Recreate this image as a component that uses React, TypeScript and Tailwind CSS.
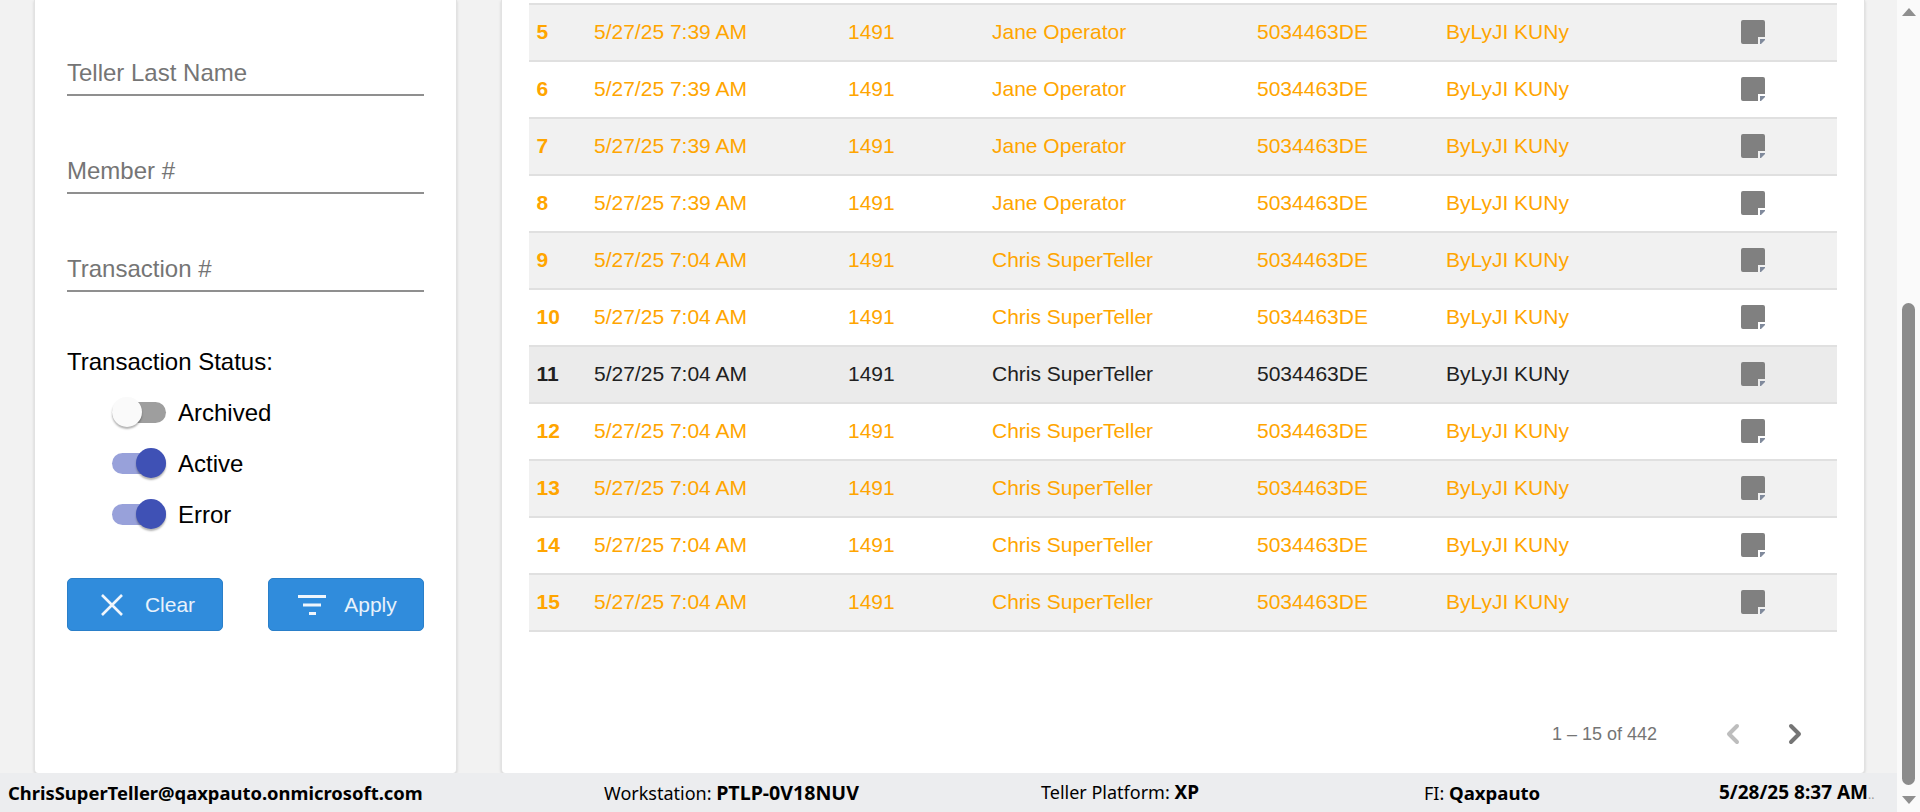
import { ChevronLeft, ChevronRight } from "lucide-react";

type Row = { id: number; time: string; name: string; active?: boolean };

const rows: Row[] = [
  { id: 5, time: "5/27/25 7:39 AM", name: "Jane Operator" },
  { id: 6, time: "5/27/25 7:39 AM", name: "Jane Operator" },
  { id: 7, time: "5/27/25 7:39 AM", name: "Jane Operator" },
  { id: 8, time: "5/27/25 7:39 AM", name: "Jane Operator" },
  { id: 9, time: "5/27/25 7:04 AM", name: "Chris SuperTeller" },
  { id: 10, time: "5/27/25 7:04 AM", name: "Chris SuperTeller" },
  { id: 11, time: "5/27/25 7:04 AM", name: "Chris SuperTeller", active: true },
  { id: 12, time: "5/27/25 7:04 AM", name: "Chris SuperTeller" },
  { id: 13, time: "5/27/25 7:04 AM", name: "Chris SuperTeller" },
  { id: 14, time: "5/27/25 7:04 AM", name: "Chris SuperTeller" },
  { id: 15, time: "5/27/25 7:04 AM", name: "Chris SuperTeller" },
];

function NoteIcon() {
  return (
    <svg width="24" height="24" viewBox="0 0 24 24" className="block">
      <path d="M2 0h20a2 2 0 0 1 2 2v15h-7v7H2a2 2 0 0 1-2-2V2a2 2 0 0 1 2-2z" fill="#808080" />
      <path d="M19 19h5v1l-4 4h-1z" fill="#808a9c" />
    </svg>
  );
}

function FilterField({ label }: { label: string }) {
  return (
    <div className="h-[98px] flex flex-col justify-end">
      <div className="h-[43px] text-[24px] leading-[39px] text-[#757575] border-b-2 border-[#8f8f8f]">{label}</div>
    </div>
  );
}

function Toggle({ label, on }: { label: string; on?: boolean }) {
  return (
    <div className="h-[51px] flex items-center pl-[45px]">
      <div className={`relative w-[54px] h-[21px] rounded-full ${on ? "bg-[#98a1da]" : "bg-[#9e9e9e]"}`}>
        <div
          className={`absolute top-[-5px] w-[30px] h-[30px] rounded-full shadow-[0_2px_2px_rgba(0,0,0,0.3)] ${
            on ? "right-0 bg-[#3f51b5]" : "left-0 bg-[#fafafa]"
          }`}
        />
      </div>
      <span className="ml-3 text-[24px] text-black">{label}</span>
    </div>
  );
}

function TableRow({ row }: { row: Row }) {
  const color = row.active ? "text-[#212121]" : "text-[#ffa500]";
  const bg = row.active ? "bg-[#ebebeb]" : row.id % 2 === 1 ? "bg-[#f1f1f1]" : "bg-white";
  return (
    <div
      className={`h-[57px] pb-[2px] border-b-2 border-[#e0e0e0] grid grid-cols-[65px_254px_144px_265px_189px_295px_1fr] items-center text-[21px] ${bg} ${color}`}
    >
      <span className="pl-[7.500px] font-bold">{row.id}</span>
      <span>{row.time}</span>
      <span>1491</span>
      <span>{row.name}</span>
      <span>5034463DE</span>
      <span>ByLyJI KUNy</span>
      <NoteIcon />
    </div>
  );
}

export default function App() {
  return (
    <div className="h-screen flex overflow-hidden bg-[#f2f2f2] font-['Liberation_Sans',sans-serif]">
      <div className="flex-1 flex flex-col min-w-0">
        <div className="flex-1 flex min-h-0">
          {/* Filter panel */}
          <aside className="ml-[34px] w-[423px] bg-white rounded-b-[4px] border-x border-[#e2e2e2] shadow-[0_1px_3px_rgba(0,0,0,0.15)] px-[32px]">
            <div className="mt-[-2px]">
              <FilterField label="Teller Last Name" />
              <FilterField label="Member #" />
              <FilterField label="Transaction #" />
            </div>
            <div className="mt-[55px] text-[24px] leading-[30px] text-black">Transaction Status:</div>
            <div className="mt-[10px]">
              <Toggle label="Archived" />
              <Toggle label="Active" on />
              <Toggle label="Error" on />
            </div>
            <div className="mt-[38px] flex justify-between">
              <button className="w-[156px] h-[53px] pl-[5px] rounded-[5px] bg-[#308cdc] border border-[#2a7fc9] text-[21px] text-[#e8f2fb] flex items-center justify-center gap-[21px]">
                <svg width="24" height="24" viewBox="0 0 24 24" fill="none" stroke="#f0f6fc" strokeWidth="2.6">
                  <path d="M2 2l20 20M22 2L2 22" />
                </svg>
                Clear
              </button>
              <button className="w-[156px] h-[53px] pl-[3px] rounded-[5px] bg-[#308cdc] border border-[#2a7fc9] text-[21px] text-[#e8f2fb] flex items-center justify-center gap-[18px]">
                <svg width="28" height="20" viewBox="0 0 28 20" fill="#f0f6fc">
                  <path d="M0 0h28v3H0zM5 8.500h18v3H5zM11 17h7v3h-7z" />
                </svg>
                Apply
              </button>
            </div>
          </aside>

          {/* Results panel */}
          <main className="ml-[44px] w-[1364px] bg-white rounded-b-[4px] border-x border-[#e2e2e2] shadow-[0_1px_3px_rgba(0,0,0,0.15)] pl-[27px] pr-[27px] flex flex-col">
            <div className="mt-[3px] border-t-2 border-[#e0e0e0]">
              {rows.map((row) => (
                <TableRow key={row.id} row={row} />
              ))}
            </div>
            <div className="mt-[86px] flex items-center text-[18px] text-[#757575]">
              <span className="ml-[1023px]">1 – 15 of 442</span>
              <ChevronLeft className="ml-[60px] text-[#bdbdbd]" size={32} strokeWidth={3} />
              <ChevronRight className="ml-[30px] text-[#757575]" size={32} strokeWidth={3} />
            </div>
          </main>
        </div>

        {/* Status bar */}
        <footer className="h-[39px] shrink-0 bg-[#ecedef] text-[18px] text-black font-['Noto_Sans',sans-serif] grid grid-cols-[604px_437px_383px_295px_1fr] items-center whitespace-nowrap">
          <b className="pl-2 text-[18.400px]">ChrisSuperTeller@qaxpauto.onmicrosoft.com</b>
          <span>
            Workstation: <b className="text-[19.600px]">PTLP-0V18NUV</b>
          </span>
          <span>
            Teller Platform: <b className="text-[19px]">XP</b>
          </span>
          <span>
            FI: <b className="text-[18.600px]">Qaxpauto</b>
          </span>
          <span>
            <b className="text-[19px]">5/28/25 8:37 AM</b>
            <span className="text-[#9a9a9a] text-[12px]">..</span>
          </span>
        </footer>
      </div>

      {/* Scrollbar */}
      <div className="w-[23px] shrink-0 bg-[#fafafa] flex flex-col items-center relative">
        <div className="mt-[8px] w-0 h-0 border-x-[7.500px] border-x-transparent border-b-[8px] border-b-[#8f8f8f]" />
        <div className="mt-[287px] w-[13px] h-[482px] rounded-full bg-[#8c8c8c]" />
        <div className="mt-[11px] w-0 h-0 border-x-[7.500px] border-x-transparent border-t-[8px] border-t-[#8f8f8f]" />
      </div>
    </div>
  );
}
